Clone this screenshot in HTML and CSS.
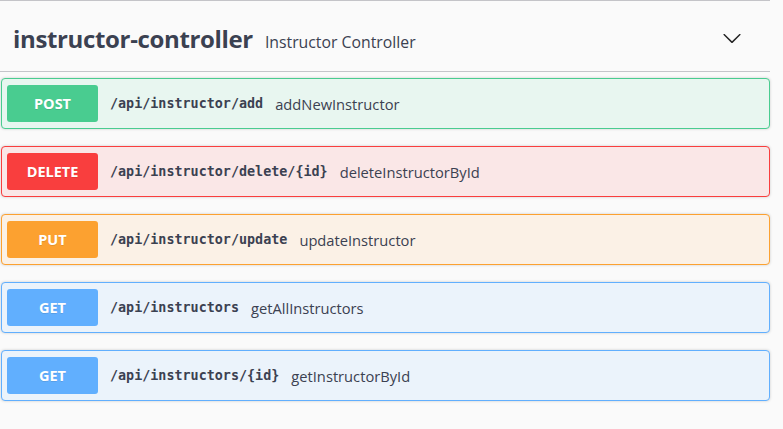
FILE: index.html
```html
<!DOCTYPE html>
<html>
<head>
<meta charset="utf-8">
<link rel="stylesheet" href="styles.css">
</head>
<body>
<div class="wrap">
  <div class="tag">
    <h3 class="tag-title"><span class="tag-name">instructor-controller</span><span class="tag-desc">Instructor Controller</span></h3>
    <svg class="arrow" width="20" height="20" viewBox="0 0 20 20"><path d="M17.418 6.109c.272-.268.709-.268.979 0s.271.701 0 .969l-7.908 7.83c-.27.268-.707.268-.979 0l-7.908-7.830c-.27-.268-.27-.701 0-.969.271-.268.709-.268.979 0L10 13.25l7.418-7.141z" fill="#222"/></svg>
  </div>
  <div class="ops">
    <div class="op post"><span class="method">POST</span><span class="path">/api/instructor/add</span><span class="desc">addNewInstructor</span></div>
    <div class="op delete"><span class="method">DELETE</span><span class="path">/api/instructor/delete/{id}</span><span class="desc">deleteInstructorById</span></div>
    <div class="op put"><span class="method">PUT</span><span class="path">/api/instructor/update</span><span class="desc">updateInstructor</span></div>
    <div class="op get"><span class="method">GET</span><span class="path">/api/instructors</span><span class="desc">getAllInstructors</span></div>
    <div class="op get"><span class="method">GET</span><span class="path">/api/instructors/{id}</span><span class="desc">getInstructorById</span></div>
  </div>
</div>
</body>
</html>
```
FILE: styles.css
```css
html, body {
  margin: 0;
  padding: 0;
  background: #fafafa;
  color: #3b4151;
  font-family: "Open Sans", sans-serif;
}
.wrap {
  width: 770px;
  border-top: 1px solid #c4c4c8;
}
.tag {
  display: flex;
  align-items: center;
  justify-content: space-between;
  height: 71px;
  border-bottom: 1px solid #c4c5ca;
  box-sizing: border-box;
  padding: 4px 28px 0 13px;
}
.tag-title {
  margin: 0;
  display: flex;
  align-items: baseline;
}
.tag-name {
  font-family: "Open Sans", sans-serif;
  font-weight: 700;
  font-size: 24px;
  letter-spacing: -0.35px;
  color: #3b4151;
}
.tag-desc {
  font-family: "Open Sans", sans-serif;
  font-weight: 400;
  font-size: 15.8px;
  margin-left: 12px;
  color: #3b4151;
}
.arrow {
  display: block;
  margin-top: 0;
}
.ops {
  padding: 6px 0 0 1px;
}
.op {
  display: flex;
  align-items: center;
  height: 51px;
  box-sizing: border-box;
  padding: 0 5px;
  margin-bottom: 17px;
  border: 1px solid;
  border-radius: 4px;
  box-shadow: 0 0 3px rgba(0, 0, 0, 0.19);
}
.method {
  width: 91px;
  height: 37px;
  line-height: 37px;
  text-align: center;
  border-radius: 3px;
  color: #fff;
  font-family: "Open Sans", sans-serif;
  font-weight: 700;
  font-size: 14.5px;
  text-shadow: 0 1px 0 rgba(0, 0, 0, 0.1);
}
.path {
  margin-left: 12px;
  font-family: "DejaVu Sans Mono", monospace;
  font-weight: 600;
  font-size: 13.4px;
  color: #3b4151;
}
.desc {
  margin-left: 12px;
  font-family: "Open Sans", sans-serif;
  font-size: 14.7px;
  color: #3b4151;
}
.post { background: #e8f6f0; border-color: #49cc90; }
.post .method { background: #49cc90; }
.delete { background: #fae7e7; border-color: #f93e3e; }
.delete .method { background: #f93e3e; }
.put { background: #fbf1e6; border-color: #fca130; }
.put .method { background: #fca130; }
.get { background: #ebf3fb; border-color: #61affe; }
.get .method { background: #61affe; }
```
